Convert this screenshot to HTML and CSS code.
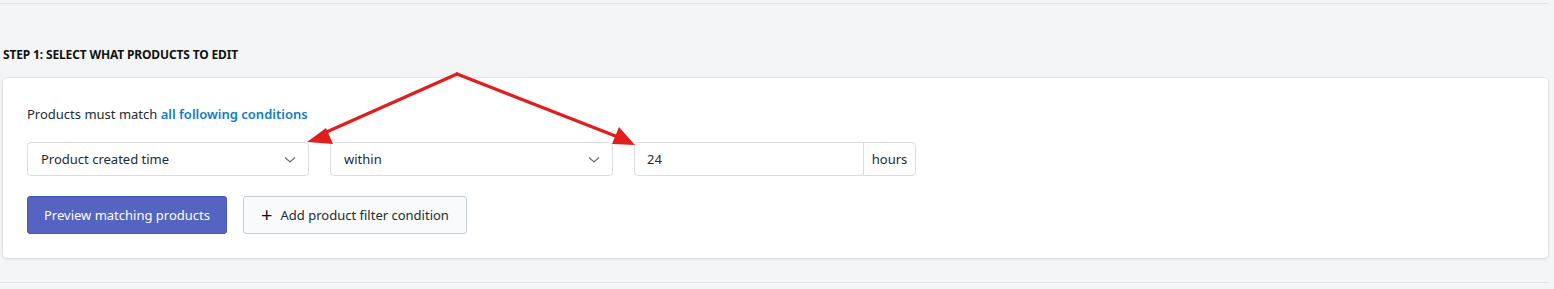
FILE: index.html
```html
<!DOCTYPE html>
<html>
<head>
<meta charset="utf-8">
<link rel="stylesheet" href="styles.css">
</head>
<body>
<div class="page">
  <div class="rule rule-top"></div>
  <h2 class="step-title">STEP 1: SELECT WHAT PRODUCTS TO EDIT</h2>
  <div class="card">
    <p class="match-text">Products must match <a class="link">all following conditions</a></p>
    <div class="cond-row">
      <div class="select select-field">
        <span>Product created time</span>
        <svg class="chev" width="12" height="8" viewBox="0 0 12 8"><path d="M1 1.5 L6 6 L11 1.5" fill="none" stroke="#637381" stroke-width="1.3"/></svg>
      </div>
      <div class="select select-op">
        <span>within</span>
        <svg class="chev" width="12" height="8" viewBox="0 0 12 8"><path d="M1 1.5 L6 6 L11 1.5" fill="none" stroke="#637381" stroke-width="1.3"/></svg>
      </div>
      <div class="input-group">
        <div class="input-value">24</div>
        <div class="addon">hours</div>
      </div>
    </div>
    <div class="actions">
      <button class="btn btn-primary">Preview matching products</button>
      <button class="btn btn-default"><span class="plus">+</span>Add product filter condition</button>
    </div>
  </div>
  <div class="rule rule-bottom"></div>
  <svg class="arrows" width="1554" height="289" viewBox="0 0 1554 289">
    <g stroke="#e01e1e" stroke-width="3.2" fill="none" stroke-linecap="round">
      <path d="M457 74 L322 134"/>
      <path d="M457 74 L618 137"/>
    </g>
    <g fill="#e01e1e">
      <polygon points="307,142 326,128 333,144"/>
      <polygon points="635,145 612,144 619,127"/>
    </g>
  </svg>
</div>
</body>
</html>
```

FILE: styles.css
```css
html, body {
  margin: 0;
  padding: 0;
  background: #f4f5f7;
}
body {
  font-family: "Noto Sans", "Open Sans", "Liberation Sans", sans-serif;
  color: #212b36;
}
.page {
  position: relative;
  width: 1554px;
  height: 289px;
  padding: 3px 6px 0 3px;
  box-sizing: border-box;
}
.rule {
  height: 1px;
  background: #dfe2e6;
  margin-left: -3px;
}
.step-title {
  margin: 41px 0 0 0;
  font-size: 12px;
  line-height: 20px;
  font-weight: 700;
  color: #111;
  letter-spacing: -0.15px;
}
.card {
  margin-top: 13px;
  background: #fff;
  border-radius: 4px;
  box-shadow: 0 0 0 1px rgba(63,63,68,0.04), 0 1px 3px 0 rgba(63,63,68,0.15);
  padding: 25px 24px 24px 24px;
  height: 180px;
  box-sizing: border-box;
}
.match-text {
  margin: 0;
  font-size: 13px;
  line-height: 22px;
  color: #212b36;
}
.link {
  color: #137cbd;
  font-weight: 600;
}
.cond-row {
  display: flex;
  gap: 21px;
  margin-top: 17px;
}
.select {
  height: 34px;
  box-sizing: border-box;
  border: 1px solid #d9dde1;
  border-radius: 4px;
  background: #fff;
  display: flex;
  align-items: center;
  justify-content: space-between;
  padding: 0 12px 0 13px;
  font-size: 13px;
  color: #212b36;
}
.select-field { width: 282px; }
.select-op { width: 283px; }
.chev { margin-top: 1px; }
.input-group {
  display: flex;
  width: 282px;
  height: 34px;
  box-sizing: border-box;
  border: 1px solid #d9dde1;
  border-radius: 4px;
  background: #fff;
  font-size: 13px;
}
.input-value {
  flex: 1;
  display: flex;
  align-items: center;
  padding-left: 12px;
}
.addon {
  width: 51px;
  border-left: 1px solid #d9dde1;
  display: flex;
  align-items: center;
  justify-content: center;
}
.actions {
  display: flex;
  gap: 16px;
  margin-top: 20px;
}
.btn {
  height: 38px;
  box-sizing: border-box;
  border-radius: 3px;
  font-family: inherit;
  font-size: 13px;
  padding: 0;
  display: flex;
  align-items: center;
  justify-content: center;
}
.btn-primary {
  width: 200px;
  background: #5563c1;
  border: 1px solid #4856b5;
  color: #fff;
}
.btn-default {
  width: 224px;
  background: #f9fafb;
  border: 1px solid #c4cdd5;
  color: #212b36;
}
.plus {
  font-size: 20px;
  font-weight: 400;
  margin-right: 8px;
  margin-top: -2px;
  color: #111;
}
.rule-bottom {
  margin-top: 24px;
}
.arrows {
  position: absolute;
  left: 0;
  top: 0;
  pointer-events: none;
}
```
